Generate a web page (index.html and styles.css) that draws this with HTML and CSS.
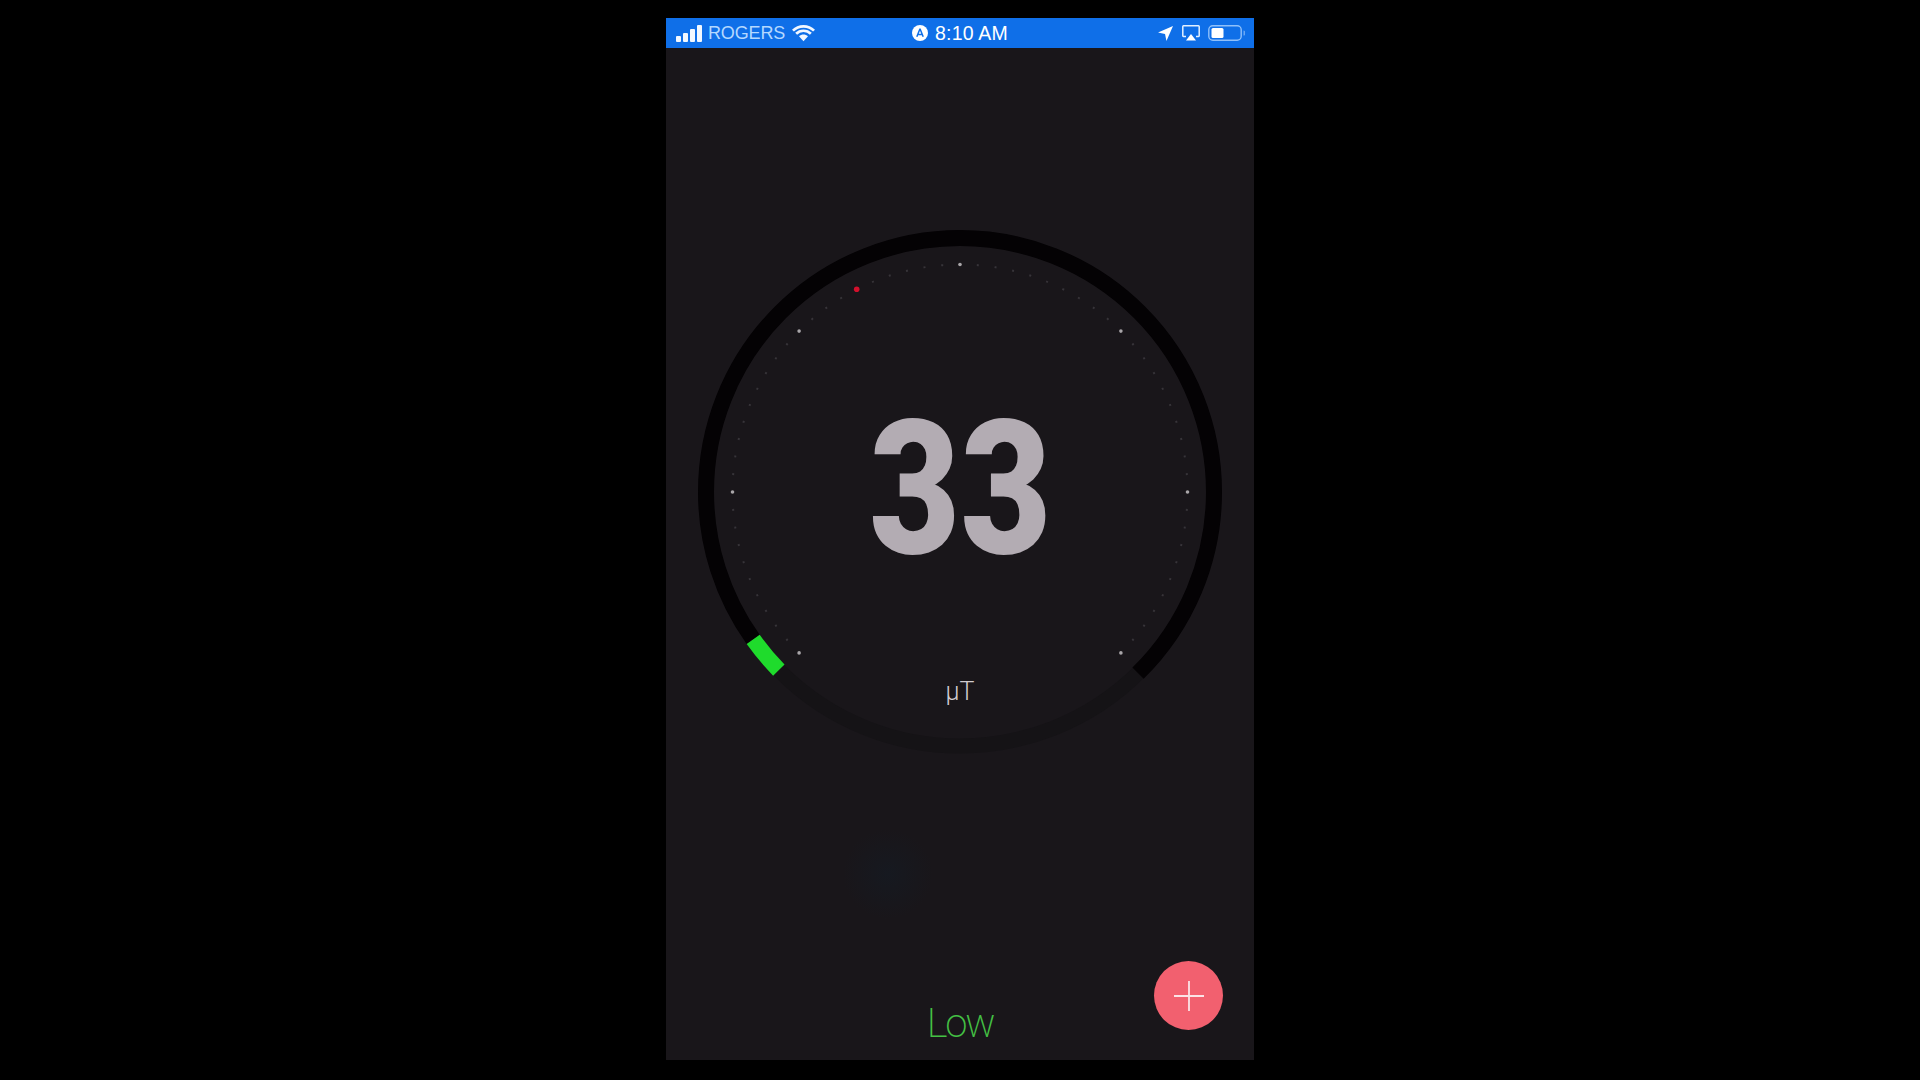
FILE: index.html
```html
<!DOCTYPE html>
<html lang="en">
<head>
<meta charset="utf-8">
<title>Magnetic field meter</title>
<link rel="stylesheet" href="styles.css">
</head>
<body>
<div class="phone">
  <header class="status">
    <div class="status-left">
      <svg class="ic-signal" viewBox="0 0 26 17"><rect x="0" y="11" width="5" height="6" rx="1"/><rect x="7" y="8" width="5" height="9" rx="1"/><rect x="14" y="4" width="5" height="13" rx="1"/><rect x="21" y="0" width="5" height="17" rx="1"/></svg>
      <span class="carrier">ROGERS</span>
      <svg class="ic-wifi" viewBox="0 0 24 18"><path d="M1 6.500C7 .5 17 .5 23 6.500M4.300 9.800C8.500 5.600 15.500 5.600 19.700 9.800" fill="none" stroke="#f2f8ff" stroke-width="2.800"/><path d="M7.300 12.400C10 9.800 14 9.800 16.700 12.400L12 17.500z" fill="#f2f8ff"/></svg>
    </div>
    <div class="status-mid">
      <svg class="ic-alarm" viewBox="0 0 16 16"><circle cx="8" cy="8" r="8" fill="#fff"/><path d="M8 3.800L4.800 11.800M8 3.800l3.200 8M5.800 9.400h4.400" stroke="#1070e8" stroke-width="1.500" fill="none"/></svg>
      <span class="time">8:10 AM</span>
    </div>
    <div class="status-right">
      <svg class="ic-arrow" viewBox="0 0 16 16"><path d="M16 0L0 7L7.500 8.500L9 16z" fill="#fff"/></svg>
      <svg class="ic-airplay" viewBox="0 0 18 16"><path d="M4 11.500H1.500A.8.8 0 0 1 .8 10.700V1.500A.8.8 0 0 1 1.500.8h15a.8.8 0 0 1 .7.7v9.200a.8.8 0 0 1-.7.8H14" fill="none" stroke="#e3f0ff" stroke-width="1.500"/><path d="M9 9L14 15.500H4z" fill="#fff"/></svg>
      <svg class="ic-battery" viewBox="0 0 37 16"><rect x=".8" y=".8" width="32.400" height="14.400" rx="4" fill="none" stroke="#8fc0fa" stroke-width="1.400"/><rect x="3.500" y="3" width="12" height="10" rx="1.500" fill="#fff"/><path d="M35.500 5.500a2 2.500 0 0 1 0 5z" fill="#6aa8f5"/></svg>
    </div>
  </header>

  <main class="screen">
    <div class="dial">
      <svg class="dial-art" viewBox="0 0 540 540">
        <defs>
          <clipPath id="upper"><polygon points="270,270 -70,610 -70,-70 610,-70 610,610"/></clipPath>
        </defs>
        <circle class="track" cx="270" cy="270" r="254" pathLength="360"/>
        <circle class="arc" cx="270" cy="270" r="254" pathLength="360" transform="rotate(-90 270 270)"/>
        <circle class="marker" cx="270" cy="270" r="254" pathLength="360" transform="rotate(-90 270 270)"/>
        <g clip-path="url(#upper)">
          <circle class="ticks" cx="270" cy="270" r="227.500" pathLength="360"/>
        </g>
        <g class="majors">
          <circle cx="270" cy="42.500" r="1.800"/>
          <circle cx="430.900" cy="109.100" r="1.800"/>
          <circle cx="497.500" cy="270" r="1.800"/>
          <circle cx="430.900" cy="430.900" r="1.800"/>
          <circle cx="109.100" cy="430.900" r="1.800"/>
          <circle cx="42.500" cy="270" r="1.800"/>
          <circle cx="109.100" cy="109.100" r="1.800"/>
        </g>
        <circle class="needle" cx="166.700" cy="67.300" r="2.800"/>
      </svg>
      <div class="value">33</div>
      <div class="unit">µT</div>
    </div>
    <div class="level">Low</div>
    <button class="fab" type="button" aria-label="Add">
      <svg viewBox="0 0 30 30"><path d="M15 0V30M0 15H30" stroke="#fbe3e6" stroke-width="1.800" fill="none"/></svg>
    </button>
  </main>
</div>
</body>
</html>
```
FILE: styles.css
```css
* { box-sizing: border-box; }
html, body { margin: 0; height: 100%; }
body {
  background: #000;
  display: flex;
  justify-content: center;
  padding-top: 18px;
  font-family: "Liberation Sans", Arial, sans-serif;
}
.phone {
  width: 588px;
  height: 1042px;
  display: flex;
  flex-direction: column;
  background: #19161a;
}
.status {
  height: 30px;
  flex: none;
  background: #0f6fe8;
  display: grid;
  grid-template-columns: 1fr auto 1fr;
  align-items: center;
  padding: 0 10px;
  color: #fff;
}
.status-left, .status-mid, .status-right { display: flex; align-items: center; }
.status-right { justify-content: flex-end; }
.ic-signal { width: 26px; height: 17px; fill: #f2f8ff; margin-right: 6px; }
.carrier { font-size: 18px; color: #b4d8ff; width: 84px; letter-spacing: -.15px; }
.ic-wifi { width: 23px; height: 18px; }
.status-mid { gap: 7px; }
.ic-alarm { width: 16px; height: 16px; }
.time { font-size: 19.500px; letter-spacing: .2px; }
.ic-arrow { width: 15px; height: 15px; margin-right: 9px; }
.ic-airplay { width: 18px; height: 16px; margin-right: 8px; }
.ic-battery { width: 37px; height: 16px; margin-right: -1px; }

.screen {
  flex: 1;
  position: relative;
  display: flex;
  flex-direction: column;
  align-items: center;
  padding-top: 174px;
  background: radial-gradient(circle 45px at 222px 826px, #161920, rgba(22, 25, 32, 0));
}
.dial {
  width: 540px;
  height: 540px;
  display: grid;
}
.dial > * { grid-area: 1 / 1; }
.dial-art { width: 540px; height: 540px; display: block; }
.track { fill: none; stroke: #151316; stroke-width: 15; }
.arc {
  fill: none;
  stroke: #040204;
  stroke-width: 16;
  stroke-dasharray: 261 99;
  stroke-dashoffset: -234.500;
}
.marker {
  fill: none;
  stroke: #1fdb2c;
  stroke-width: 16;
  stroke-dasharray: 9 351;
  stroke-dashoffset: -225.500;
}
.ticks {
  fill: none;
  stroke: #373439;
  stroke-width: 2;
  stroke-dasharray: .5 4;
  stroke-dashoffset: .25;
}
.majors { fill: #a9a6a9; }
.needle { fill: #d3102c; }
.value {
  place-self: center;
  font-family: Roboto, sans-serif;
  font-weight: 900;
  font-size: 187px;
  line-height: 1;
  color: #b3acb3;
  margin-top: -6px;
  transform: scaleX(.84);
}
.unit {
  place-self: end center;
  margin-bottom: 58px;
  font-family: Roboto, sans-serif;
  font-weight: 300;
  font-size: 25px;
  line-height: 1;
  color: #d0ccd0;
}
.level {
  margin-top: auto;
  margin-bottom: 16px;
  font-family: Roboto, sans-serif;
  font-weight: 200;
  font-size: 40px;
  line-height: 1;
  letter-spacing: -2.200px;
  color: #44c044;
}
.fab {
  position: absolute;
  right: 31px;
  bottom: 30px;
  width: 69px;
  height: 69px;
  padding: 0;
  border: 0;
  border-radius: 50%;
  background: #f2606f;
  display: flex;
  align-items: center;
  justify-content: center;
}
.fab svg { width: 30px; height: 30px; display: block; }
```
